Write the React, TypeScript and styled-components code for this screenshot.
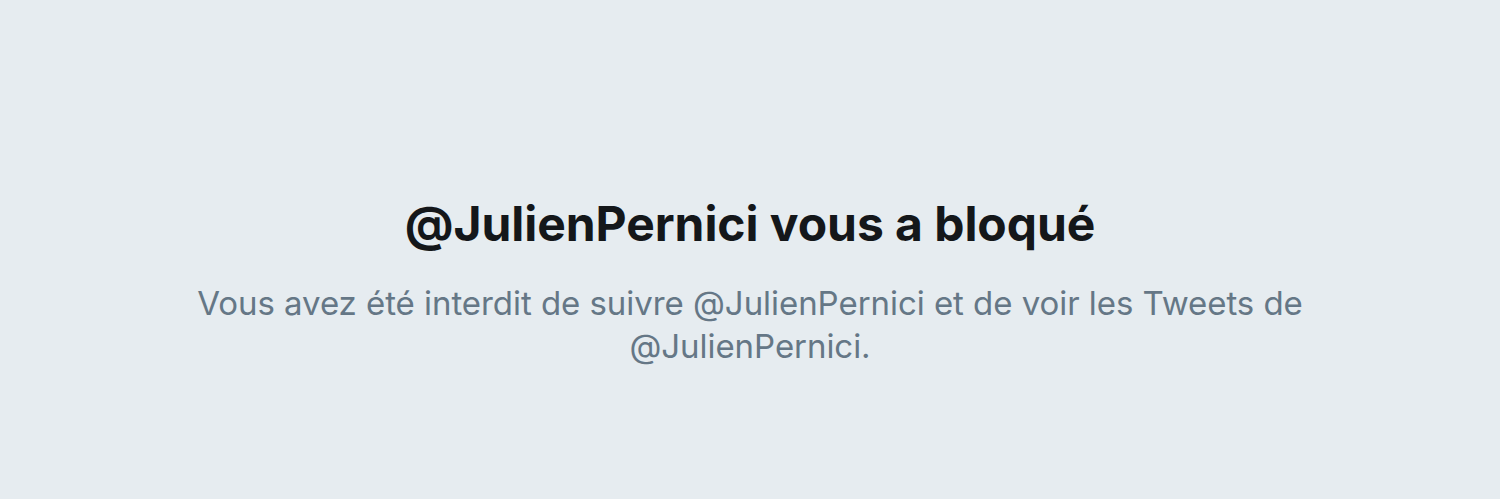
import React from "react";
import styled, { createGlobalStyle } from "styled-components";

const Global = createGlobalStyle`
  html, body { margin: 0; padding: 0; background: #e6ecf0; }
  body { font-family: Inter, "Noto Sans", sans-serif; }
`;

const Page = styled.main`
  width: 1500px;
  height: 499px;
  background: #e6ecf0;
  display: flex;
  flex-direction: column;
  align-items: center;
  justify-content: flex-start;
  padding-top: 194px;
  box-sizing: border-box;
`;

const Title = styled.h1`
  margin: 0;
  font-family: Inter, "Noto Sans", sans-serif;
  font-weight: 700;
  font-size: 48px;
  line-height: 60px;
  color: #14171a;
  letter-spacing: -0.05px;
`;

const Message = styled.p`
  margin: 28px 0 0;
  max-width: 1140px;
  text-align: center;
  font-family: Inter, "Noto Sans", sans-serif;
  font-weight: 400;
  font-size: 33px;
  line-height: 43px;
  color: #657786;
  letter-spacing: -0.05px;
`;

export default function App() {
  return (
    <>
      <Global />
      <Page>
        <Title>@JulienPernici vous a bloqué</Title>
        <Message>
          Vous avez été interdit de suivre @JulienPernici et de voir les Tweets de @JulienPernici.
        </Message>
      </Page>
    </>
  );
}
